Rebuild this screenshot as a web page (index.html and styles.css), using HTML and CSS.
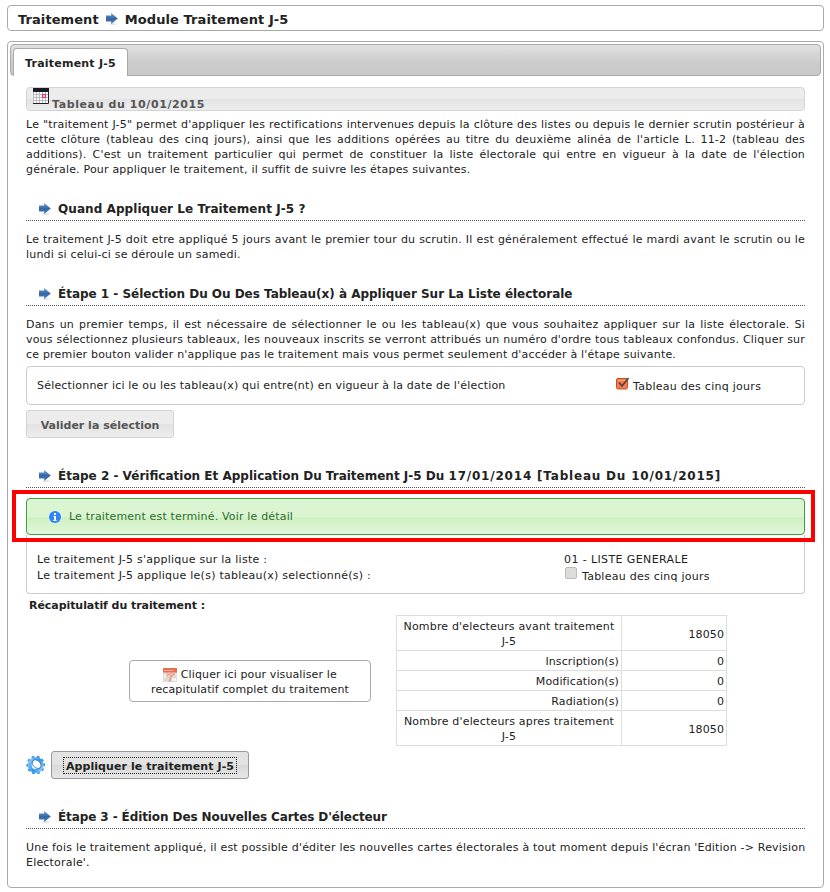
FILE: index.html
```html
<!DOCTYPE html>
<html lang="fr">
<head>
<meta charset="utf-8">
<title>Module Traitement J-5</title>
<link rel="stylesheet" href="styles.css">
</head>
<body>
<svg class="defs" width="0" height="0">
  <defs>
    <linearGradient id="blue" x1="0" y1="0" x2="0" y2="1"><stop offset="0" stop-color="#7a9fcd"/><stop offset=".5" stop-color="#3467a8"/><stop offset="1" stop-color="#4a7cbb"/></linearGradient>
    <symbol id="arrow" viewBox="0 0 12 12"><ellipse cx="7" cy="11" rx="4" ry=".8" fill="#ddd"/><path d="M0 2.500h5.200V0L11.800 5.400 5.200 11V8.600H0z" fill="url(#blue)"/></symbol>
  </defs>
</svg>
<header class="crumb"><span>Traitement</span><svg class="arrow"><use href="#arrow"/></svg><span>Module Traitement J-5</span></header>
<main class="panel">
  <nav class="tabs"><span class="tab">Traitement J-5</span></nav>
  <div class="content">
    <div class="bar">
      <svg class="cal" viewBox="0 0 16 16"><path d="M0 0h16v16H0z" fill="#fff"/><path d="M.5 4v12M3.5 4v12M6.5 4v12M9.5 4v12M12.5 4v12M0 6.5h15M0 9.5h15M0 12.5h15" stroke="#bbb"/><path d="M0 0h16v4H0z" fill="#1a1a26"/><path d="M15.5 3v12.500H0" fill="none" stroke="#222"/><path d="M9.500 6.500h3v3h-3z" fill="#fff" stroke="#f0146e"/></svg><span>Tableau du 10/01/2015</span>
    </div>
    <p class="text"><span class="full">Le "traitement J-5" permet d'appliquer les rectifications intervenues depuis la clôture des listes ou depuis le dernier scrutin postérieur à</span> <span class="full">cette clôture (tableau des cinq jours), ainsi que les additions opérées au titre du deuxième alinéa de l'article L. 11-2 (tableau des</span> <span class="full">additions). C'est un traitement particulier qui permet de constituer la liste électorale qui entre en vigueur à la date de l'élection</span> <span class="last">générale. Pour appliquer le traitement, il suffit de suivre les étapes suivantes.</span></p>
    <h3 class="when"><svg class="arrow"><use href="#arrow"/></svg><span>Quand Appliquer Le Traitement J-5 ?</span></h3>
    <p class="text"><span class="full">Le traitement J-5 doit etre appliqué 5 jours avant le premier tour du scrutin. Il est généralement effectué le mardi avant le scrutin ou le</span> <span class="last">lundi si celui-ci se déroule un samedi.</span></p>
    <h3 class="step1"><svg class="arrow"><use href="#arrow"/></svg><span>Étape 1 - Sélection Du Ou Des Tableau(x) à Appliquer Sur La Liste électorale</span></h3>
    <p class="text"><span class="full">Dans un premier temps, il est nécessaire de sélectionner le ou les tableau(x) que vous souhaitez appliquer sur la liste électorale. Si</span> <span class="full">vous sélectionnez plusieurs tableaux, les nouveaux inscrits se verront attribués un numéro d'ordre tous tableaux confondus. Cliquer sur</span> <span class="last">ce premier bouton valider n'applique pas le traitement mais vous permet seulement d'accéder à l'étape suivante.</span></p>
    <div class="choice">
      <span class="choice-label">Sélectionner ici le ou les tableau(x) qui entre(nt) en vigueur à la date de l'élection</span>
      <span class="choice-value"><svg class="check" viewBox="0 0 14 13"><rect x=".5" y="1.500" width="11" height="10.500" rx="1.500" fill="#f47c50" stroke="#c4512c"/><path d="M2 3.500h8" stroke="#f9a381"/><path d="M3 5.500l3 3.500 6.500-8" fill="none" stroke="#5a4038" stroke-width="1.700"/></svg><span>Tableau des cinq jours</span></span>
    </div>
    <button class="btn validate">Valider la sélection</button>
    <h3 class="step2"><svg class="arrow"><use href="#arrow"/></svg><span>Étape 2 - Vérification Et Application Du Traitement J-5 Du <span class="wide">17/01/2014 [Tableau Du 10/01/2015]</span></span></h3>
    <div class="result">
      <div class="message"><svg class="info" viewBox="0 0 12 12"><circle cx="6" cy="6" r="6" fill="#2e83ff"/><path d="M5 2h2v2H5zM4.500 5H7v4h.700v1H4.300V9H5V6h-.500z" fill="#fff"/></svg><span>Le traitement est terminé. Voir le détail</span></div>
      <div class="details">
        <span>Le traitement J-5 s'applique sur la liste :</span><span class="caps">01 - LISTE GENERALE</span>
        <span>Le traitement J-5 applique le(s) tableau(x) selectionné(s) :</span><span class="list"><i class="box"></i><span>Tableau des cinq jours</span></span>
      </div>
    </div>
    <div class="recap-title">Récapitulatif du traitement :</div>
    <div class="recap">
      <a class="view"><svg class="pdf" viewBox="0 0 14 14"><path d="M0 0h14v14H0z" fill="#dfdcda"/><path d="M0 0h14v4.500H0z" fill="#ee6a4e"/><path d="M1 2.500h9" stroke="#f8b7a5"/><path d="M1 11L5 7l3-1.500 4 .5M4 5.500l4 2-2 6M12 5L8 9l-1 5" fill="none" stroke="#f5a08c" stroke-width="1.200"/><path d="M1 6l3 2-3 4zM9 10h4v3H9z" fill="#f4f2f0"/></svg> Cliquer ici pour visualiser le<br>recapitulatif complet du traitement</a>
      <table>
        <tr class="tall"><th>Nombre d'electeurs avant traitement<br>J-5</th><td>18050</td></tr>
        <tr><td>Inscription(s)</td><td>0</td></tr>
        <tr><td>Modification(s)</td><td>0</td></tr>
        <tr><td>Radiation(s)</td><td>0</td></tr>
        <tr class="tall"><th>Nombre d'electeurs apres traitement<br>J-5</th><td>18050</td></tr>
      </table>
    </div>
    <div class="apply">
      <svg class="gear" viewBox="0 0 20 20"><defs><linearGradient id="g" x1="0" y1="0" x2="1" y2="1"><stop offset="0" stop-color="#8accfc"/><stop offset=".55" stop-color="#2c93ee"/><stop offset="1" stop-color="#8fd0fb"/></linearGradient></defs><g transform="rotate(-12 10 10)"><circle cx="9.700" cy="10" r="8.300" fill="none" stroke="#3f8ed8" stroke-width="2" stroke-dasharray="2.700 2.515"/><circle cx="9.700" cy="10" r="6" fill="none" stroke="url(#g)" stroke-width="4"/><ellipse cx="10.800" cy="9.300" rx="3.600" ry="5" transform="rotate(-35 10.800 9.300)" fill="#fff" stroke="#2468b8" stroke-width=".8"/></g></svg>
      <button class="btn active"><span>Appliquer le traitement J-5</span></button>
    </div>
    <h3 class="step3"><svg class="arrow"><use href="#arrow"/></svg><span>Étape 3 - Édition Des Nouvelles Cartes D'électeur</span></h3>
    <p class="text"><span class="full">Une fois le traitement appliqué, il est possible d'éditer les nouvelles cartes électorales à tout moment depuis l'écran 'Edition -&gt; Revision</span> <span class="last">Electorale'.</span></p>
  </div>
</main>
</body>
</html>
```
FILE: styles.css
```css
*, *::after { box-sizing: border-box; }
body { margin: 0; padding: 5px 6px 0 7px; background: #fff; color: #222; font: 11px/15px "DejaVu Sans", sans-serif; letter-spacing: .19px; white-space: nowrap; }
.defs { position: absolute; }
svg { flex: none; }
.arrow { width: 12px; height: 12px; }
.crumb { display: flex; align-items: center; gap: 7px; height: 26px; padding: 2px 10px 0; border: 1px solid #aaa; border-radius: 4px; font-size: 13px; font-weight: bold; letter-spacing: .08px; }
.panel { height: 847px; margin-top: 10px; padding: 2px; border: 1px solid #aaa; border-radius: 4px; }
.tabs { display: flex; align-items: flex-end; height: 32px; padding-left: 2px; border: 1px solid #aaa; border-radius: 4px; background: linear-gradient(#e1e1e1, #cbcbcb 60%, #c9c9c9); }
.tab { width: 115px; height: 28px; margin-bottom: -1px; padding: 7px 0 0 11px; border: 1px solid #aaa; border-bottom: 0; border-radius: 4px 4px 0 0; background: #fff; font-weight: bold; letter-spacing: .22px; }
.content { padding: 11px 16px 0; }
.bar { display: flex; align-items: flex-start; gap: 3px; height: 24px; padding-left: 6px; border: 1px solid #d3d3d3; border-radius: 4px; background: linear-gradient(#ececec 0 50%, #e3e3e3 50%, #ededed); color: #555; font-weight: bold; letter-spacing: .6px; }
.bar span { padding-top: 9px; }
.cal { width: 16px; height: 16px; }
.text { margin: 6px 0 0; }
.text span { display: block; }
.full { text-align: justify; text-align-last: justify; }
h3 { display: flex; align-items: center; gap: 7px; height: 24px; margin: 20px 0 0; padding: 0 0 0 13px; border-bottom: 1px dotted #555; font-size: 12px; line-height: 16px; }
h3 + .text { margin-top: 11px; }
.when { letter-spacing: .07px; }
.step1 { letter-spacing: -.02px; }
.step2 { letter-spacing: 0; }
.wide { letter-spacing: .8px; }
.step3 { letter-spacing: -.1px; }
.choice { display: flex; align-items: center; height: 39px; margin-top: 4px; padding-left: 10px; border: 1px solid #ccc; border-radius: 4px; }
.choice-label { width: 579px; }
.choice-value { display: flex; gap: 3px; align-items: flex-start; letter-spacing: .27px; }
.choice-value span { padding-top: 2px; }
.check { width: 14px; height: 13px; }
.btn { height: 28px; padding: 2px 0 0; border: 1px solid #d3d3d3; border-radius: 3px; background: linear-gradient(#ececec 0 50%, #e3e3e3 50%, #ededed); color: #555; font: bold 11px/15px "DejaVu Sans", sans-serif; letter-spacing: 0; }
.validate { display: block; width: 148px; margin-top: 5px; }
.validate + h3 { margin-top: 26px; }
.result { position: relative; height: 106px; padding-top: 10px; }
.result::after { content: ""; position: absolute; left: -14px; top: 2px; width: 803px; height: 52px; border: 4px solid #f00; }
.message { display: flex; align-items: center; gap: 8px; height: 37px; padding-left: 22px; border: 1px solid #3f9f3f; border-radius: 4px; background: linear-gradient(#dbf5d2 0 50%, #cfefc0 54%, #e2f7dc); color: #2e6e2e; letter-spacing: .17px; }
.info { width: 12px; height: 12px; }
.details { display: grid; grid-template-columns: 527px 1fr; grid-template-rows: 16px 16px; height: 59px; padding: 17px 0 0 10px; border: 1px solid #ccc; border-top: 0; border-radius: 0 0 4px 4px; letter-spacing: .25px; }
.caps { letter-spacing: .39px; }
.list { display: flex; gap: 5px; padding-top: 1px; }
.box { width: 12px; height: 12px; margin: -2px 0 0 1px; border: 1px solid #bbb; border-radius: 2px; background: #dddcda; }
.recap-title { height: 21px; padding: 4px 0 0 3px; font-weight: bold; letter-spacing: -.06px; }
.recap { display: flex; align-items: center; gap: 25px; height: 131px; padding-left: 103px; }
.view { width: 242px; height: 42px; padding: 6px 0 0; border: 1px solid #aaa; border-radius: 4px; text-align: center; letter-spacing: .12px; }
.pdf { width: 14px; height: 14px; margin: -3px 0; vertical-align: -1px; }
table { width: 331px; height: 131px; border-collapse: collapse; table-layout: fixed; text-align: right; }
tr { height: 20px; }
.tall { height: 35px; }
th, td { padding: 1px 2px 0; border: 1px solid #ddd; font-weight: normal; letter-spacing: .12px; }
.tall td { padding-top: 3px; }
th { padding: 2px 0 0; text-align: center; letter-spacing: .17px; }
th + td { width: 105px; }
th { width: 225px; }
.apply { display: flex; align-items: center; gap: 5px; height: 28px; margin-top: 5px; }
.gear { width: 20px; height: 20px; }
.active { width: 198px; padding: 0; border-color: #999; background: linear-gradient(#e3e3e3 0 50%, #d8d8d8 50%, #e6e6e6); color: #222; letter-spacing: .08px; }
.active span { display: block; width: 174px; height: 17px; margin: 0 auto; padding-top: 1px; border: 1px dotted #222; }
.apply + h3 { margin-top: 26px; }
```
